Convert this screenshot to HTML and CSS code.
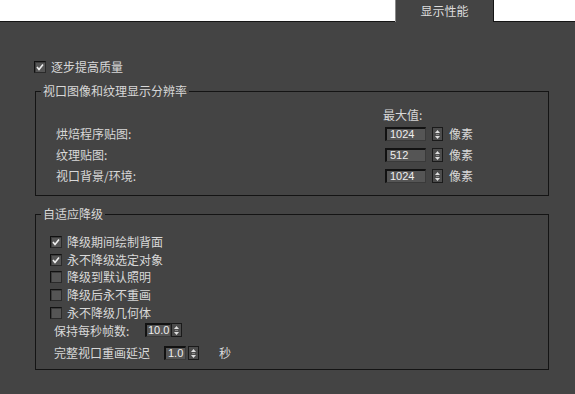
FILE: index.html
```html
<!DOCTYPE html>
<html lang="zh-CN">
<head>
<meta charset="UTF-8" />
<title>显示性能</title>
<link rel="stylesheet" href="styles.css">
</head>
<body>
<div class="tabbar">
  <div class="tab">显示性能</div>
</div>

<div class="panel">
  <div class="check top"><span class="box on"></span>逐步提高质量</div>

  <fieldset class="group res">
    <legend>视口图像和纹理显示分辨率</legend>
    <div class="maxlabel">最大值:</div>
    <div class="res-row">
      <span class="res-label">烘焙程序贴图:</span>
      <span class="num w41">1024</span>
      <span class="spin"></span>
      <span class="unit">像素</span>
    </div>
    <div class="res-row">
      <span class="res-label">纹理贴图:</span>
      <span class="num w41">512</span>
      <span class="spin"></span>
      <span class="unit">像素</span>
    </div>
    <div class="res-row">
      <span class="res-label">视口背景/环境:</span>
      <span class="num w41">1024</span>
      <span class="spin"></span>
      <span class="unit">像素</span>
    </div>
  </fieldset>

  <fieldset class="group degrade">
    <legend>自适应降级</legend>
    <div class="checks">
      <div class="check"><span class="box on"></span>降级期间绘制背面</div>
      <div class="check"><span class="box on"></span>永不降级选定对象</div>
      <div class="check"><span class="box"></span>降级到默认照明</div>
      <div class="check"><span class="box"></span>降级后永不重画</div>
      <div class="check"><span class="box"></span>永不降级几何体</div>
    </div>
    <div class="fps-row">
      <span class="fps-label">保持每秒帧数:</span>
      <span class="num w26">10.0</span>
      <span class="spin"></span>
    </div>
    <div class="delay-row">
      <span class="delay-label">完整视口重画延迟</span>
      <span class="num w22">1.0</span>
      <span class="spin gap2"></span>
      <span class="sec">秒</span>
    </div>
  </fieldset>
</div>
</body>
</html>
```

FILE: styles.css
```css
body {
  margin: 0;
  background: #444444;
  color: #d8d8d8;
  font-family: "Noto Sans CJK SC", "Liberation Sans", sans-serif;
  font-size: 12px;
  width: 575px;
  height: 394px;
  overflow: hidden;
}

/* top tab strip */
.tabbar {
  height: 21px;
  background: #fff;
  border-bottom: 1px solid #151515;
  display: flex;
  justify-content: flex-end;
  padding-right: 81px;
}
.tab {
  width: 97px;
  height: 22px;
  margin-bottom: -1px;
  background: #444444;
  border-left: 1px solid #8a8a8a;
  border-right: 1px solid #151515;
  text-align: center;
  line-height: 22px;
  color: #dcdcdc;
}

.panel {
  padding: 0 26px 0 35px;
}

/* checkboxes */
.check {
  display: flex;
  align-items: center;
  height: 17.75px;
  line-height: 16px;
  white-space: nowrap;
}
.check.top {
  height: 16px;
  margin: 37px 0 0 -1px;
}
.box {
  width: 12px;
  height: 12px;
  box-sizing: border-box;
  margin-right: 5px;
  background: #555555;
  border: 1px solid #2a2a2a;
  border-top-color: #111;
  border-left-color: #111;
  box-shadow: inset 1px 1px 0 #3c3c3c;
  flex: none;
}
.box.on {
  background: #555555 url("data:image/svg+xml;utf8,<svg xmlns='http://www.w3.org/2000/svg' width='10' height='10'><polyline points='2,5 4,7.5 8,2.5' fill='none' stroke='%23f0f0f0' stroke-width='1.6'/></svg>") no-repeat center;
}

/* group boxes */
.group {
  margin: 8px 0 0;
  padding: 0;
  border: 1px solid #141414;
  min-width: 0;
}
.group legend {
  margin-left: 5px;
  padding: 0 2px;
  line-height: 16px;
  color: #d8d8d8;
}
.res {
  padding-bottom: 9px;
}
.degrade {
  margin-top: 10px;
  padding-bottom: 6px;
}

/* resolution rows */
.maxlabel {
  margin: 8px 0 0 347px;
  line-height: 16px;
}
.res-row {
  display: flex;
  align-items: center;
  height: 21px;
  padding-left: 20px;
}
.res-label {
  width: 329px;
  flex: none;
}
.unit {
  margin-left: 6px;
}

/* numeric field */
.num {
  height: 14px;
  box-sizing: border-box;
  background: #555555;
  border-top: 2px solid #121212;
  border-left: 2px solid #121212;
  border-right: 1px solid #3a3a3a;
  border-bottom: 1px solid #3a3a3a;
  padding-left: 3px;
  font-family: "Liberation Sans", sans-serif;
  font-size: 11px;
  line-height: 11px;
  color: #eeeeee;
  flex: none;
}
.w41 { width: 41px; }
.w26 { width: 26px; padding-left: 1px; }
.w22 { width: 22px; padding-left: 2px; }

.spin {
  width: 11px;
  height: 14px;
  box-sizing: border-box;
  margin-left: 6px;
  border: 1px solid #1a1a1a;
  background: #4c4c4c url("data:image/svg+xml;utf8,<svg xmlns='http://www.w3.org/2000/svg' width='9' height='12'><polygon points='2,5 4.5,2 7,5' fill='%23e0e0e0'/><line x1='3' y1='6.5' x2='6' y2='6.5' stroke='%23888'/><polygon points='2,8 4.5,11 7,8' fill='%23e0e0e0'/></svg>") no-repeat center;
  flex: none;
}

/* adaptive degradation */
.checks {
  margin-top: 11px;
  padding-left: 14px;
}
.fps-row,
.delay-row {
  display: flex;
  align-items: center;
  padding-left: 18px;
}
.fps-row {
  height: 17px;
}
.delay-row {
  height: 20px;
  margin-top: 4px;
}
.fps-label {
  width: 91px;
  flex: none;
}
.fps-row .spin {
  margin-left: 0;
}
.delay-label {
  width: 110px;
  flex: none;
}
.spin.gap2 {
  margin-left: 2px;
}
.sec {
  margin-left: 20px;
}
```
